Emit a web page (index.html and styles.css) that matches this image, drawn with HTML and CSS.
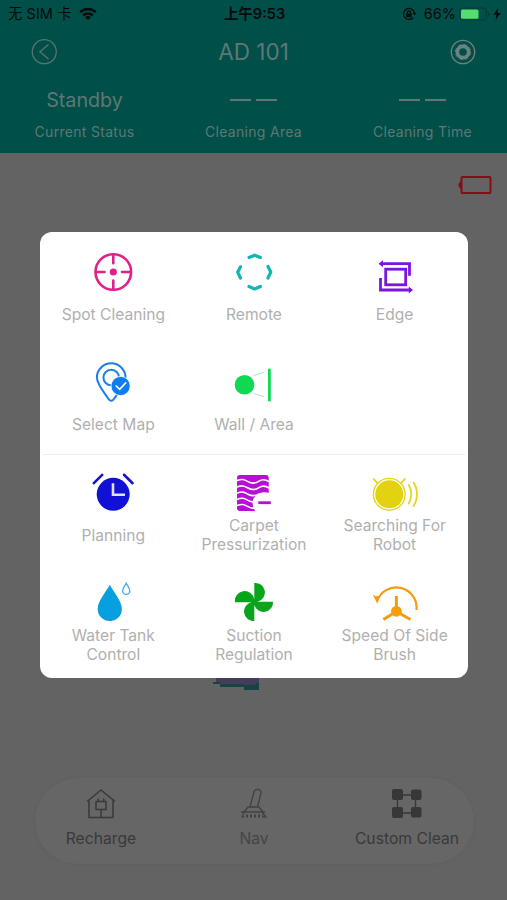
FILE: index.html
```html
<!DOCTYPE html>
<html lang="en">
<head>
  <meta charset="UTF-8" />
  <title>AD 101</title>
  <link rel="stylesheet" href="styles.css">
</head>
<body>

<header class="header">
  <div class="statusbar">
    <div class="carrier">
      <span>无 SIM 卡</span>
      <svg width="18" height="14" viewBox="0 0 18 14" fill="none" stroke="#050b0a" stroke-width="2.4">
        <path d="M1.2 5.2a11.2 11.2 0 0 1 15.6 0M4.2 8.4a7 7 0 0 1 9.6 0" />
        <path d="M9 13 6.2 10.4a4 4 0 0 1 5.6 0z" fill="#050b0a" stroke="none" />
      </svg>
    </div>
    <div class="clock">上午9:53</div>
    <div class="power">
      <svg width="14" height="14" viewBox="0 0 14 14" fill="none" stroke="#050b0a" stroke-width="1.2">
        <path d="M11.2 10.5A5.5 5.5 0 1 1 12.4 6" />
        <path d="M10.4 5.8h4l-2 2.6z" fill="#050b0a" stroke="none" />
        <rect x="4.2" y="6.4" width="5.4" height="3.8" fill="#050b0a" stroke="none" />
        <path d="M5.4 6.5V5.3a1.5 1.5 0 0 1 3 0v1.2" />
      </svg>
      <span class="percent">66%</span>
      <svg class="battery" width="32" height="14" viewBox="0 0 32 14">
        <rect x=".6" y="1.1" width="27" height="12" rx="3" fill="none" stroke="#033c37" stroke-width="1" />
        <rect x="2" y="2.5" width="17.5" height="9.2" rx="1.5" fill="#54df6c" />
        <path d="M29 5v4c2-.8 2-3.2 0-4z" fill="#033c37" />
      </svg>
      <svg width="8" height="12" viewBox="0 0 8 12"><path d="M5.2 0 .4 6.8h3L2.6 12 7.6 4.9H4.5z" fill="#050b0a" /></svg>
    </div>
  </div>

  <div class="titlebar">
    <svg width="26" height="26" viewBox="0 0 26 26" fill="none" stroke="#5c7371" stroke-width="1.3">
      <circle cx="13.3" cy="12.7" r="12" />
      <path d="M17.5 5.5 9 12.7l8.5 7.2" />
    </svg>
    <h1>AD 101</h1>
    <svg width="26" height="26" viewBox="0 0 26 26" fill="none" stroke="#6b8280">
      <circle cx="13" cy="13" r="11.7" stroke-width="1.3" />
      <circle cx="13" cy="13" r="5.6" stroke-width="3.6" />
      <circle cx="13" cy="13" r="7.5" stroke-width="1" stroke-dasharray="3.8 2.1" />
    </svg>
  </div>

  <div class="stats">
    <div class="stat">
      <div class="value">Standby</div>
      <div class="name">Current Status</div>
    </div>
    <div class="stat">
      <div class="value"><i class="dash"></i><i class="dash"></i></div>
      <div class="name">Cleaning Area</div>
    </div>
    <div class="stat">
      <div class="value"><i class="dash"></i><i class="dash"></i></div>
      <div class="name">Cleaning Time</div>
    </div>
  </div>
</header>

<main class="map">
  <svg class="robot-battery" width="34" height="20" viewBox="0 0 34 20">
    <rect x="3.5" y="2" width="29" height="16" rx="1" fill="none" stroke="#870c17" stroke-width="2" />
    <path d="M3.5 6.5v7C-.5 13.5-.5 6.5 3.5 6.5z" fill="#870c17" />
  </svg>
  <svg class="room" width="48" height="14" viewBox="0 0 48 14">
    <path d="M3 0h43v8H7V5H3z" fill="#443c59" />
    <path d="M0 4h7v2h23v1h13V5h3v7H31V9H7V6H0z" fill="#164442" />
  </svg>
</main>

<nav class="bottombar">
  <div class="nav-item">
    <svg width="32" height="32" viewBox="0 0 32 32" fill="none" stroke="#393939" stroke-width="1.5" stroke-linejoin="round">
      <path d="M2 13.5 16 2l14 11.5M4 12.5v17h24v-17" />
      <path d="M11 13.5h10v8H11zM13.3 13.5v-3M18.7 13.5v-3M16 21.5v8" />
    </svg>
    <span>Recharge</span>
  </div>
  <div class="nav-item nav-off">
    <svg width="32" height="32" viewBox="0 0 32 32" fill="none" stroke="#424242" stroke-width="1.3" stroke-linejoin="round">
      <path d="m12 19 4-15c1-4 8-3 7 1l-3.5 14M10 19h11l4 5H6zM3 24h24M6 24l-2 5h2M24 24l4 5h-3" />
      <path d="M8 28h17" stroke-width="3" stroke-dasharray="2 2" />
    </svg>
    <span>Nav</span>
  </div>
  <div class="nav-item">
    <svg width="32" height="32" viewBox="0 0 32 32" fill="#373737">
      <path d="M6.5 7h18v18h-18z" fill="none" stroke="#373737" stroke-width="1.3" />
      <rect x="1" y="1" width="11" height="11" rx="2" />
      <rect x="20" y="1.5" width="10.5" height="10.5" rx="2" />
      <rect x="1" y="19" width="11" height="11" rx="2" />
      <rect x="20" y="19" width="10.5" height="10.5" rx="2" />
    </svg>
    <span>Custom Clean</span>
  </div>
</nav>

<div class="modal">
  <div class="group">
    <div class="item">
      <svg class="icon" viewBox="0 0 48 40" fill="none" stroke="#e0218a" stroke-width="2.6" stroke-linecap="round">
        <circle cx="24.3" cy="20" r="17.8" />
        <path d="M24.3 3v8.2M24.3 28.5V37M7 20h8.5M33 20h8.3" />
        <circle cx="24.3" cy="20" r="3.6" fill="#e0218a" stroke="none" />
      </svg>
      <span>Spot Cleaning</span>
    </div>
    <div class="item">
      <svg class="icon" viewBox="0 0 48 40" fill="none" stroke="#12b5b0" stroke-width="3.2" stroke-linecap="round" stroke-linejoin="round">
        <path d="m19 5.5 5.7-2.3 5.7 2.3M19 34.5l5.7 2.5 5.7-2.5M10.5 14.8l-2.8 5.5 2.8 5.7M38 14.5l2.8 5.5L38 26" />
      </svg>
      <span>Remote</span>
    </div>
    <div class="item">
      <svg class="icon" viewBox="0 0 48 40" fill="none" stroke="#7a16dc" stroke-width="2.8">
        <rect x="14.7" y="17.2" width="20" height="15.6" />
        <path d="M10 11.7h28.5v12M9.5 26v12H40" />
        <path d="m12 8.2-4.500 3.500 4.500 3.500zM37.800 34.500l4.200 3.500-4.200 3.500z" fill="#7a16dc" stroke="none" />
      </svg>
      <span>Edge</span>
    </div>
    <div class="item">
      <svg class="icon" viewBox="0 0 48 40" fill="none" stroke="#1c7fe8" stroke-width="2">
        <path d="M22.2 38.8c-1.2 0-2-.9-2.8-2C15 30.4 7.9 22 7.9 15.6a14.3 14.3 0 0 1 28.6 0C36.5 22 29.4 30.4 25 36.8c-.8 1.1-1.6 2-2.8 2z" />
        <circle cx="22.2" cy="15.5" r="7.8" />
        <circle cx="31.6" cy="24" r="9.6" fill="#0d7cee" stroke="#fff" stroke-width=".8" />
        <path d="m26.7 23.5 4 3.8 6.5-7" stroke="#fff" stroke-width="1.7" />
      </svg>
      <span>Select Map</span>
    </div>
    <div class="item">
      <svg class="icon" viewBox="0 0 48 40">
        <circle cx="14.5" cy="22.7" r="9.8" fill="#10d853" />
        <rect x="38" y="6.5" width="2.8" height="33" rx="1" fill="#10d853" />
        <path d="m23.5 13.5 10.5-3.3M23.5 31.5 34 34.7" stroke="#a8e9bd" stroke-width="1" />
      </svg>
      <span>Wall / Area</span>
    </div>
  </div>

  <div class="group">
    <div class="item">
      <svg class="icon" viewBox="0 0 48 40" fill="none" stroke="#1414d2" stroke-width="2.6" stroke-linecap="round">
        <circle cx="24.2" cy="21.3" r="16.5" fill="#1111d6" stroke="none" />
        <path d="M4.8 10.2 13.2 1.8M35 1.8l8.600 8.400" />
        <path d="M24 11.5v10.3h10.7" stroke="#dfe0ff" stroke-linecap="square" />
      </svg>
      <span>Planning</span>
    </div>
    <div class="item">
      <svg class="icon" viewBox="0 0 48 40" fill="none" stroke="#fff" stroke-width="1.6">
        <rect x="7" y="2" width="31.7" height="36" rx="3" fill="#b80fd6" stroke="none" />
        <path d="M7 7.6c5-2 7-1.2 11 1s8 1.6 11-.4 6-2.2 10 .4M7 14c5-2 7-1.2 11 1s8 1.6 11-.4 6-2.2 10 .4M7 20.2c5-2 7-1.2 11 1s8 1.6 11-.4M7 26.4c5-2 7-1.2 11 1s8 1.6 11-.4M7 32.6c5-2 7-1.2 11 1s8 1.6 11-.4" />
        <path d="M40 20.5C32 17 23 22 22.5 29.5c0 3 1.5 6.5 3 9.5H40z" fill="#fff" stroke="none" />
        <path d="M28.3 29.7h12.500" stroke="#b80fd6" stroke-width="2.8" />
      </svg>
      <span>Carpet Pressurization</span>
    </div>
    <div class="item">
      <svg class="icon" viewBox="0 0 48 40" fill="none" stroke="#e5d51d" stroke-width="1.8" stroke-linecap="round">
        <circle cx="18.3" cy="21.3" r="14" fill="#e2d210" stroke="none" />
        <circle cx="18.3" cy="21.3" r="15.9" stroke-width="1.4" />
        <path d="m2.7 6 3.7 4.2M33.8 6l-3.7 4.2M37.7 12c3.4 5 3.4 13 0 18.5M42.5 9.5c4.6 6.5 4.6 17 0 23.5" />
      </svg>
      <span>Searching For Robot</span>
    </div>
    <div class="item">
      <svg class="icon" viewBox="0 0 48 40">
        <path d="M20.8 1.7c3.5 7 12.1 16 12.1 24.2a12.1 12.1 0 0 1-24.2 0C8.7 17.7 17.3 8.7 20.8 1.7z" fill="#069fe0" />
        <path d="M37.2.2c1.2 2.5 3.6 5 3.6 7.6a3.6 3.6 0 0 1-7.2 0c0-2.6 2.4-5.1 3.6-7.6z" fill="none" stroke="#3fb1e4" stroke-width="1.4" />
      </svg>
      <span>Water Tank Control</span>
    </div>
    <div class="item">
      <svg class="icon" viewBox="0 0 48 40" fill="#08a51a">
        <path d="M24.3 0a9.5 9.5 0 0 1 3.2 18.7H43a9.5 9.5 0 0 1-18.7 3V38a9.5 9.5 0 0 1-3-18.7H5a9.5 9.5 0 0 1 19.3-3z" />
      </svg>
      <span>Suction Regulation</span>
    </div>
    <div class="item">
      <svg class="icon" viewBox="0 0 48 40" fill="none" stroke="#f49b14" stroke-width="2.2">
        <path d="M45.5 27A20.3 20.3 0 0 0 6 18.5" />
        <path d="m1.800 11.500 3 1.800 4-.5-2.500 8z" fill="#f49b14" stroke="none" />
        <path d="M25.4 28V13M25.4 28.5l-13 8M25.4 28.5l14 8" stroke-width="3" />
        <circle cx="25.4" cy="28.3" r="5.4" fill="#f79c0c" stroke="none" />
      </svg>
      <span>Speed Of Side Brush</span>
    </div>
  </div>
</div>

</body>
</html>
```

FILE: styles.css
```css
* {
  box-sizing: border-box;
}
body {
  margin: 0;
  height: 900px;
  display: flex;
  flex-direction: column;
  position: relative;
  overflow: hidden;
  background: #636363;
  font-family: Inter, "Noto Sans CJK SC", sans-serif;
}
.header {
  height: 153px;
  background: #004f48;
  color: #5f7775;
}
.statusbar {
  height: 28px;
  padding: 0 6px 0 8px;
  display: grid;
  grid-template-columns: 1fr auto 1fr;
  align-items: center;
  color: #050b0a;
  font-size: 14.5px;
}
.carrier, .power {
  display: flex;
  align-items: center;
}
.carrier {
  gap: 8px;
  line-height: 18px;
}
.clock {
  font-weight: 600;
  line-height: 18px;
}
.power {
  justify-content: flex-end;
  padding-bottom: 1px;
}
.percent {
  margin: 0 5px 0 8px;
}
.battery {
  margin-left: -2px;
  margin-right: 2px;
}
.titlebar {
  height: 48px;
  padding: 0 31px;
  display: flex;
  align-items: center;
  justify-content: space-between;
}
.titlebar h1 {
  margin: 0;
  padding-bottom: 2px;
  font-size: 22.5px;
  font-weight: 400;
}
.stats {
  display: grid;
  grid-template-columns: repeat(3, 1fr);
  padding-top: 10px;
}
.stat {
  text-align: center;
}
.value {
  height: 28px;
  display: flex;
  justify-content: center;
  align-items: center;
  gap: 5px;
  font-size: 19.7px;
}
.dash {
  width: 21px;
  height: 2px;
  background: #5f7775;
}
.name {
  margin-top: 8px;
  line-height: 20px;
  font-size: 14px;
  letter-spacing: 0.3px;
}
.map {
  flex: 1;
  position: relative;
}
.robot-battery {
  position: absolute;
  right: 15px;
  top: 22px;
}
.room {
  position: absolute;
  left: 213px;
  top: 525px;
}
.bottombar {
  height: 86px;
  margin: 0 33px 36px 35px;
  padding: 10px 1px 0 0;
  display: flex;
  justify-content: space-between;
  border-radius: 43px;
  background: #666;
  box-shadow: 0 0 3px #5c5c5c;
  color: #393939;
  font-size: 15.7px;
}
.nav-item {
  width: 132px;
  display: flex;
  flex-direction: column;
  align-items: center;
  gap: 9px;
  line-height: 20px;
  white-space: nowrap;
}
.nav-off {
  color: #454545;
}
.modal {
  position: absolute;
  left: 40px;
  top: 232px;
  width: 428px;
  height: 446px;
  padding: 0 3px;
  border-radius: 12px;
  background: #fff;
}
.group {
  display: grid;
  grid-template-columns: repeat(3, 1fr);
  grid-auto-rows: 107px;
  row-gap: 3px;
}
.group:first-child {
  padding: 3px 0 2px;
  border-bottom: 1px solid #ededed;
}
.group:last-child {
  padding-top: 1px;
}
.item {
  padding-top: 17px;
  display: flex;
  flex-direction: column;
  align-items: center;
  gap: 3px;
}
.icon {
  width: 48px;
  height: 40px;
  overflow: visible;
}
.item span {
  width: 120px;
  height: 38px;
  display: flex;
  align-items: center;
  justify-content: center;
  text-align: center;
  font-size: 15.6px;
  line-height: 19px;
  color: #b0b0b0;
}
```
